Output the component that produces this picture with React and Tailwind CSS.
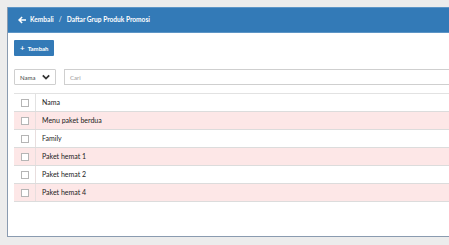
import React from "react";

const rows = [
  { name: "Menu paket berdua", pink: true },
  { name: "Family", pink: false },
  { name: "Paket hemat 1", pink: true },
  { name: "Paket hemat 2", pink: false },
  { name: "Paket hemat 4", pink: true },
];

const Check = () => (
  <span className="block w-[8px] h-[8px] border border-[#b5b5b5] bg-white" />
);

const App = () => {
  return (
    <div
      className="w-[449px] h-[245px] overflow-hidden bg-[#ececec] pl-[7px] pt-[7px] text-[#222]"
      style={{ fontFamily: "Lato, 'Open Sans', sans-serif" }}
    >
      <div className="w-[460px] h-[230px] bg-white border-l border-b border-[#8a9bb0] flex flex-col">
        <div className="h-[26px] bg-[#337ab7] border-t border-b border-[#5d95c6] flex items-center pl-[10px] text-white text-[6.6px] font-bold gap-[4px]">
          <svg width="8" height="8" viewBox="0 0 16 16" fill="white">
            <path d="M7.2 0.8 0 8l7.2 7.2 2.1-2.1L5.7 9.5H16v-3H5.7l3.6-3.6z" />
          </svg>
          <span>Kembali</span>
          <span className="font-normal mx-[1px]">/</span>
          <span>Daftar Grup Produk Promosi</span>
        </div>
        <div className="px-[6px] pt-[7px]">
          <button className="h-[16px] px-[6px] bg-[#337ab7] text-white text-[6px] font-bold rounded-[1px] flex items-center gap-[3px]">
            <span className="text-[8px] leading-none">+</span>
            <span>Tambah</span>
          </button>
          <div className="flex items-center gap-[8px] mt-[13px]">
            <div className="w-[42px] h-[16px] border border-[#cfcfcf] rounded-[1px] flex items-center justify-between px-[5px] text-[6px] text-[#444]">
              <span>Nama</span>
              <svg width="8" height="6" viewBox="0 0 10 7" fill="none" stroke="#333" strokeWidth="2.2">
                <path d="M1 1.5 5 5.5 9 1.5" />
              </svg>
            </div>
            <div className="flex-1 h-[16px] border border-[#cfcfcf] flex items-center px-[5px] text-[6px] text-[#999]">
              Cari
            </div>
          </div>
          <div className="mt-[8px] border-t border-[#e2e2e2] text-[7px]">
            <div className="flex h-[18px] border-b border-[#dcdcdc] items-center">
              <div className="w-[22px] h-full flex items-center justify-center border-r border-[#e2e2e2]">
                <Check />
              </div>
              <div className="pl-[6px]">Nama</div>
            </div>
            {rows.map((r) => (
              <div
                key={r.name}
                className={`flex h-[18px] border-b border-[#dcdcdc] items-center ${r.pink ? "bg-[#fde7e7]" : "bg-white"}`}
              >
                <div className="w-[22px] h-full flex items-center justify-center border-r border-[#e8dede]">
                  <Check />
                </div>
                <div className="pl-[6px]">{r.name}</div>
              </div>
            ))}
          </div>
        </div>
      </div>
    </div>
  );
};

export default App;
